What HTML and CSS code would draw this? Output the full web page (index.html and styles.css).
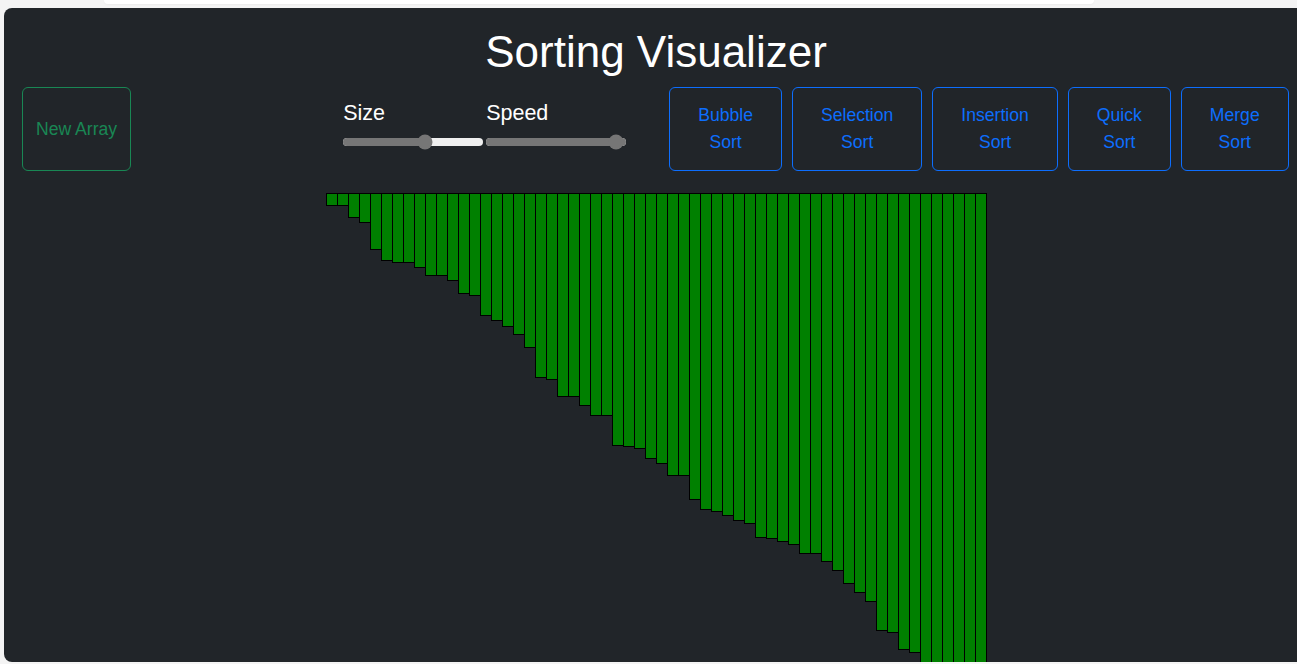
FILE: index.html
```html
<!DOCTYPE html>
<html lang="en">
<head>
<meta charset="utf-8">
<title>Sorting Visualizer</title>
<link rel="stylesheet" href="styles.css">
</head>
<body>
<div class="topcard"></div>
<main class="panel">
  <h1 class="title">Sorting Visualizer</h1>
  <div class="controls">
    <button class="btn btn-green">New Array</button>
    <div class="sliders">
      <div class="slider-col">
        <label class="slider-label">Size</label>
        <div class="range">
          <div class="range-fill" style="width:59%"></div>
          <div class="range-thumb" style="left:58.5%"></div>
        </div>
      </div>
      <div class="slider-col">
        <label class="slider-label">Speed</label>
        <div class="range">
          <div class="range-fill" style="width:100%"></div>
          <div class="range-thumb" style="left:93%"></div>
        </div>
      </div>
    </div>
    <div class="sorts">
      <button class="btn btn-blue">Bubble<br>Sort</button>
      <button class="btn btn-blue">Selection<br>Sort</button>
      <button class="btn btn-blue">Insertion<br>Sort</button>
      <button class="btn btn-blue">Quick<br>Sort</button>
      <button class="btn btn-blue">Merge<br>Sort</button>
    </div>
  </div>
  <div class="bars">
    <div class="bar" style="height:13px"></div>
    <div class="bar" style="height:13px"></div>
    <div class="bar" style="height:25px"></div>
    <div class="bar" style="height:30px"></div>
    <div class="bar" style="height:57px"></div>
    <div class="bar" style="height:68px"></div>
    <div class="bar" style="height:70px"></div>
    <div class="bar" style="height:70px"></div>
    <div class="bar" style="height:75px"></div>
    <div class="bar" style="height:83px"></div>
    <div class="bar" style="height:83px"></div>
    <div class="bar" style="height:88px"></div>
    <div class="bar" style="height:101px"></div>
    <div class="bar" style="height:103px"></div>
    <div class="bar" style="height:123px"></div>
    <div class="bar" style="height:128px"></div>
    <div class="bar" style="height:134px"></div>
    <div class="bar" style="height:142px"></div>
    <div class="bar" style="height:155px"></div>
    <div class="bar" style="height:185px"></div>
    <div class="bar" style="height:187px"></div>
    <div class="bar" style="height:204px"></div>
    <div class="bar" style="height:204px"></div>
    <div class="bar" style="height:213px"></div>
    <div class="bar" style="height:223px"></div>
    <div class="bar" style="height:223px"></div>
    <div class="bar" style="height:253px"></div>
    <div class="bar" style="height:254px"></div>
    <div class="bar" style="height:256px"></div>
    <div class="bar" style="height:266px"></div>
    <div class="bar" style="height:271px"></div>
    <div class="bar" style="height:283px"></div>
    <div class="bar" style="height:283px"></div>
    <div class="bar" style="height:307px"></div>
    <div class="bar" style="height:317px"></div>
    <div class="bar" style="height:319px"></div>
    <div class="bar" style="height:323px"></div>
    <div class="bar" style="height:328px"></div>
    <div class="bar" style="height:331px"></div>
    <div class="bar" style="height:345px"></div>
    <div class="bar" style="height:346px"></div>
    <div class="bar" style="height:349px"></div>
    <div class="bar" style="height:352px"></div>
    <div class="bar" style="height:361px"></div>
    <div class="bar" style="height:361px"></div>
    <div class="bar" style="height:369px"></div>
    <div class="bar" style="height:378px"></div>
    <div class="bar" style="height:391px"></div>
    <div class="bar" style="height:400px"></div>
    <div class="bar" style="height:409px"></div>
    <div class="bar" style="height:438px"></div>
    <div class="bar" style="height:440px"></div>
    <div class="bar" style="height:457px"></div>
    <div class="bar" style="height:460px"></div>
    <div class="bar" style="height:480px"></div>
    <div class="bar" style="height:490px"></div>
    <div class="bar" style="height:500px"></div>
    <div class="bar" style="height:510px"></div>
    <div class="bar" style="height:520px"></div>
    <div class="bar" style="height:540px"></div>
  </div>
</main>
</body>
</html>
```

FILE: styles.css
```css
html, body {
  margin: 0;
  padding: 0;
  overflow: hidden;
  background: #f4f4f4;
  font-family: "Liberation Sans", Arial, sans-serif;
}

.topcard {
  height: 4px;
  width: 990px;
  margin-left: 104px;
  background: #ffffff;
  border-radius: 0 0 10px 10px;
  box-shadow: 0 1px 2px rgba(0, 0, 0, 0.04);
}

.panel {
  margin: 4px -11px 0 4px;
  height: 654px;
  background: #212529;
  border-radius: 8px;
  overflow: hidden;
  box-sizing: border-box;
  padding-top: 18px;
}

.title {
  margin: 0;
  font-size: 44px;
  font-weight: 400;
  line-height: 1.2;
  color: #ffffff;
  text-align: center;
}

.controls {
  display: flex;
  align-items: stretch;
  margin-top: 8px;
  padding-left: 18px;
}

.btn {
  font-family: "Liberation Sans", Arial, sans-serif;
  font-size: 17.6px;
  line-height: 1.5;
  background: transparent;
  border: 1px solid;
  border-radius: 6px;
  margin: 0;
  text-align: center;
}

.btn-green {
  color: #198754;
  border-color: #198754;
  padding: 0 13px;
}

.btn-blue {
  color: #0d6efd;
  border-color: #0d6efd;
  padding: 14.6px 28px;
}

.sliders {
  display: flex;
  gap: 3px;
  margin-left: 212px;
  align-self: flex-start;
  margin-top: 10px;
}

.slider-col {
  display: flex;
  flex-direction: column;
  width: 140px;
}

.slider-label {
  color: #ffffff;
  font-size: 21.5px;
  line-height: 32px;
  height: 32px;
  margin-bottom: 9px;
}

.range {
  position: relative;
  height: 8px;
  border-radius: 4px;
  background: #efefef;
}

.range-fill {
  height: 100%;
  border-radius: 4px;
  background: #767676;
}

.range-thumb {
  position: absolute;
  top: 50%;
  width: 15px;
  height: 15px;
  border-radius: 50%;
  background: #767676;
  transform: translate(-50%, -50%);
}

.sorts {
  display: flex;
  gap: 10px;
  margin-left: 43px;
}

.bars {
  display: flex;
  justify-content: center;
  align-items: flex-start;
  margin-top: 22px;
}

.bar {
  box-sizing: border-box;
  width: 12px;
  margin-right: -1px;
  background: #008000;
  border: 1px solid #000000;
}

.bar:last-child {
  margin-right: 0;
}
```
